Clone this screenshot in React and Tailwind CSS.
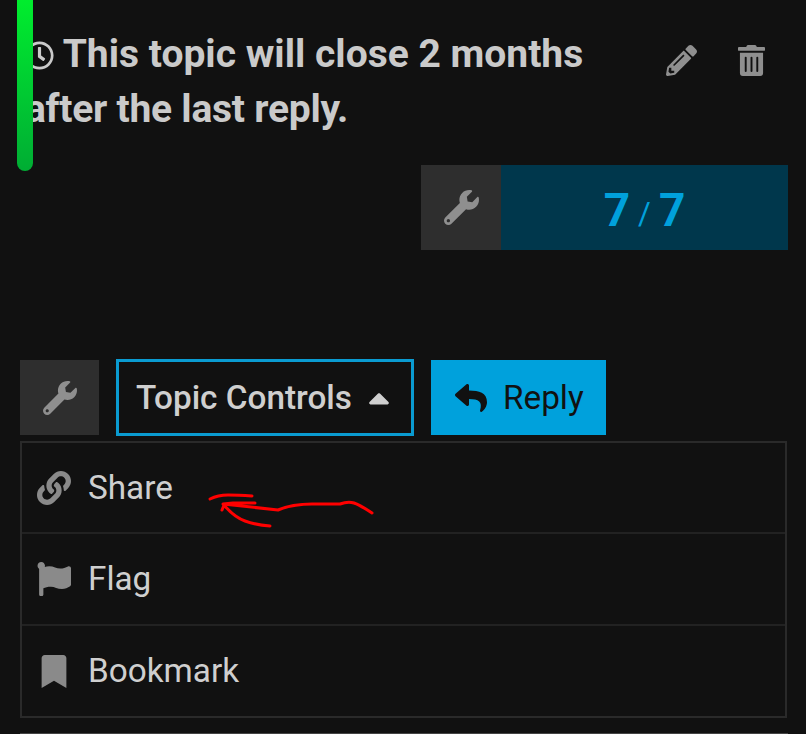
import React from "react";
import { FaRegClock, FaPencilAlt, FaTrashAlt, FaWrench, FaCaretUp, FaReply, FaLink, FaFlag, FaBookmark } from "react-icons/fa";

const font = { fontFamily: "Roboto, sans-serif" };

function MenuRow({ icon, label, className }) {
  return (
    <div className={`flex items-center pl-[15px] ${className}`}>
      <span className="w-[51px] flex text-[#8a8a8a]">{icon}</span>
      <span className="text-[33.3px] leading-none text-[#cfcfcf]">{label}</span>
    </div>
  );
}

export default function App() {
  return (
    <div className="relative w-[806px] h-[734px] overflow-hidden bg-[#111111]" style={font}>
      <div className="absolute left-[17px] top-0 w-[16px] h-[171px] rounded-b-lg bg-gradient-to-b from-[#00ed2d] to-[#00ad33]" />

      <div className="flex pt-[27px] pl-[25px] pr-[36px] h-[165px]">
        <p className="w-[600px] shrink-0 text-[39px] leading-[55px] font-bold text-[#cacaca]">
          <FaRegClock className="inline-block w-[29px] h-[29px] align-[-3px]" /> This topic will close 2 months<br />
          <span className="tracking-[-0.25px]">after the last reply.</span>
        </p>
        <div className="flex items-start gap-[41px] pt-[18px] ml-[41px] text-[#8f8f8f]">
          <FaPencilAlt className="w-[31px] h-[31px]" />
          <FaTrashAlt className="w-[27px] h-[31px]" />
        </div>
      </div>

      <div className="flex justify-end pr-[18px]">
        <div className="flex h-[85px] w-[367px]">
          <div className="w-[80px] flex items-center justify-center bg-[#2e2e2e] text-[#8f8f8f]">
            <FaWrench className="w-[35px] h-[35px]" />
          </div>
          <div className="flex-1 flex items-center justify-center gap-[8px] pt-[5px] bg-[#00374c] text-[#00a1dc] font-bold">
            <span className="text-[46px] leading-none">7</span>
            <span className="text-[31px] leading-none font-normal pt-[6px]">/</span>
            <span className="text-[46px] leading-none">7</span>
          </div>
        </div>
      </div>

      <div className="flex items-center gap-[17px] pl-[20px] mt-[109px] h-[77px]">
        <div className="w-[79px] h-[75px] flex items-center justify-center bg-[#2e2e2e] text-[#8f8f8f]">
          <FaWrench className="w-[34px] h-[34px]" />
        </div>
        <div className="w-[298px] h-[77px] flex items-center pl-[17px] border-[3px] border-[#0a9bd1] text-[#cfcfcf]">
          <span className="text-[33.3px] leading-none font-medium">Topic Controls</span>
          <FaCaretUp className="w-[34px] h-[34px] ml-[10px]" />
        </div>
        <div className="w-[175px] h-[75px] flex items-center pl-[23px] bg-[#00a1dc] text-[#111111]">
          <FaReply className="w-[34px] h-[32px] mr-[15px]" />
          <span className="text-[33.3px] leading-none">Reply</span>
        </div>
      </div>

      <div className="ml-[20px] mt-[5px] w-[767px] border-2 border-[#2a2a2a]">
        <MenuRow className="h-[91px] border-b-2 border-[#222222]" icon={<FaLink className="w-[34px] h-[34px]" />} label="Share" />
        <MenuRow className="h-[92px] border-b-2 border-[#222222]" icon={<FaFlag className="w-[34px] h-[34px]" />} label="Flag" />
        <MenuRow className="h-[90px]" icon={<FaBookmark className="w-[26px] h-[33px] ml-[4px]" />} label="Bookmark" />
      </div>

      <div className="ml-[20px] mt-[15px] w-[768px] h-[2px] bg-[#444444]" />

      <svg className="absolute left-0 top-0 pointer-events-none" width="806" height="734" fill="none" stroke="#ff0000" strokeWidth="3" strokeLinecap="round" strokeLinejoin="round">
        <path d="M210 499 Q218 495 228 495 T252 496" />
        <path d="M255 503 L233 503 L223 504 Q250 507 278 510 Q292 504 312 504 T340 504 Q348 501 354 503 T372 513" />
        <path d="M222 510 L224 505 Q234 517 245 521 T270 526" />
      </svg>
    </div>
  );
}
